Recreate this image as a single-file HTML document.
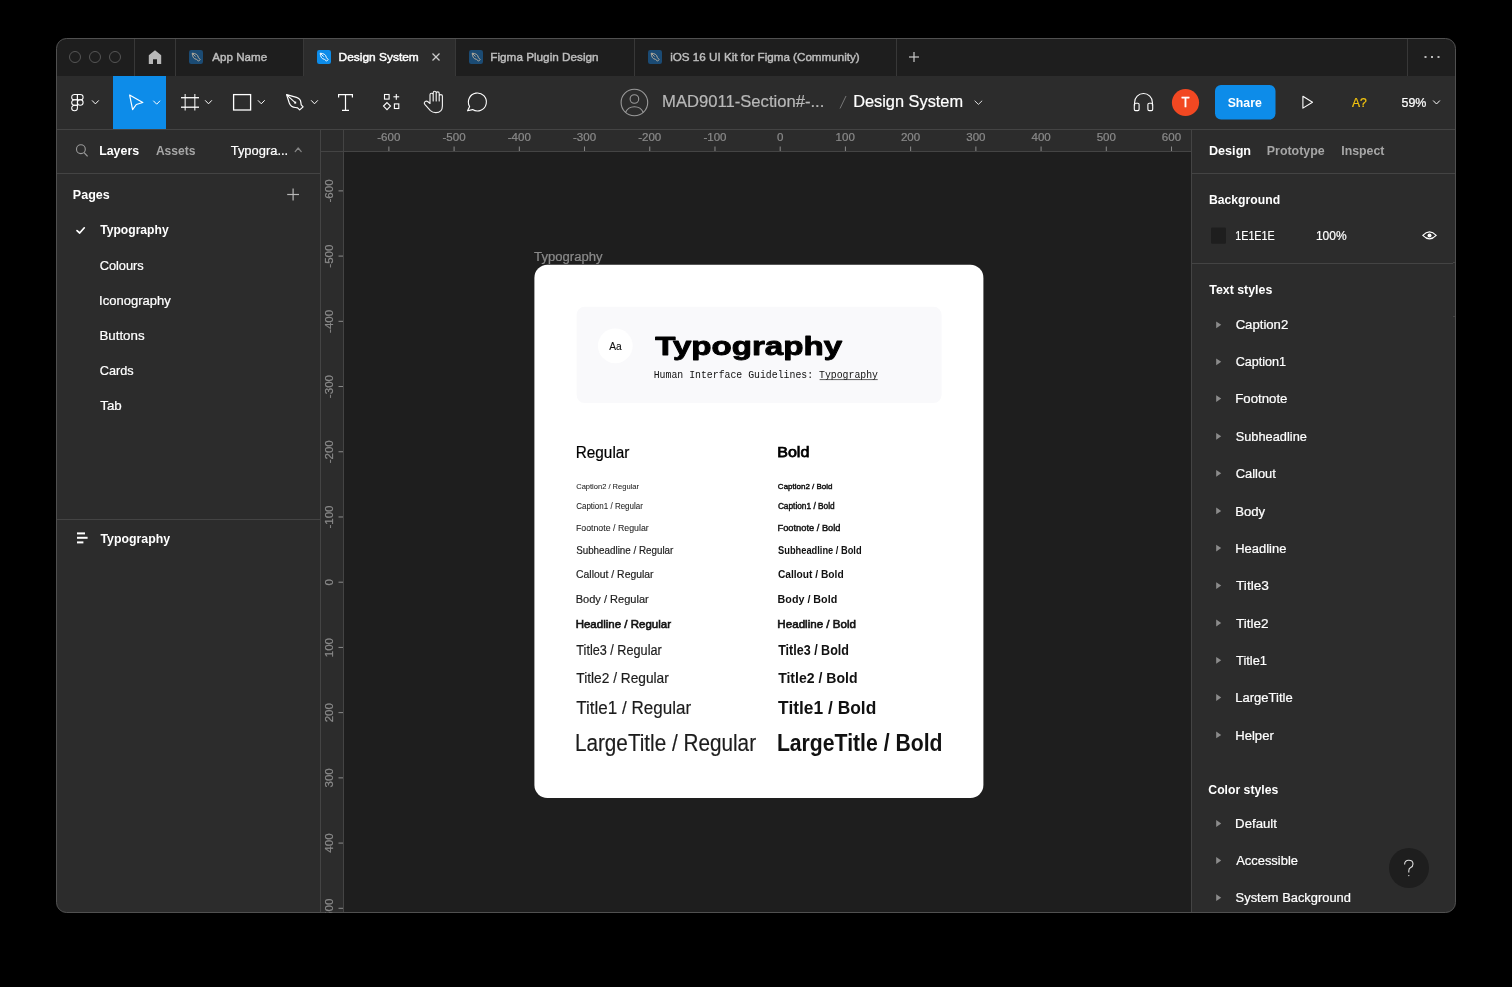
<!DOCTYPE html>
<html><head><meta charset="utf-8"><title>Figma - Design System</title>
<style>html,body{margin:0;padding:0;background:#000;width:1512px;height:987px;overflow:hidden}
svg{position:absolute;left:0;top:0;display:block;will-change:transform}
text{white-space:pre}</style></head>
<body><svg width="1512" height="987" viewBox="0 0 1512 987" shape-rendering="auto">
<defs><clipPath id="win"><rect x="56.5" y="38.5" width="1399.0" height="874.0" rx="10"/></clipPath></defs>
<g clip-path="url(#win)">
<rect x="56.00" y="38.00" width="1400.00" height="875.00" fill="#2c2c2c" rx="0.00" />
<rect x="56.00" y="38.00" width="1400.00" height="38.00" fill="#1e1e1e" rx="0.00" />
<rect x="303.50" y="38.00" width="152.00" height="38.00" fill="#2c2c2c" rx="0.00" />
<line x1="134.50" y1="38.00" x2="134.50" y2="76.00" stroke="#383838" stroke-width="1.00" />
<line x1="175.50" y1="38.00" x2="175.50" y2="76.00" stroke="#383838" stroke-width="1.00" />
<line x1="303.50" y1="38.00" x2="303.50" y2="76.00" stroke="#383838" stroke-width="1.00" />
<line x1="455.50" y1="38.00" x2="455.50" y2="76.00" stroke="#383838" stroke-width="1.00" />
<line x1="634.50" y1="38.00" x2="634.50" y2="76.00" stroke="#383838" stroke-width="1.00" />
<line x1="896.50" y1="38.00" x2="896.50" y2="76.00" stroke="#383838" stroke-width="1.00" />
<line x1="1407.50" y1="38.00" x2="1407.50" y2="76.00" stroke="#383838" stroke-width="1.00" />
<rect x="56.00" y="76.00" width="1400.00" height="53.00" fill="#2c2c2c" rx="0.00" />
<line x1="56.00" y1="129.50" x2="1456.00" y2="129.50" stroke="#444444" stroke-width="1.00" />
<rect x="113.00" y="76.00" width="53.00" height="53.00" fill="#0d8ce9" rx="0.00" />
<rect x="56.00" y="130.00" width="265.00" height="783.00" fill="#2c2c2c" rx="0.00" />
<line x1="56.00" y1="173.50" x2="320.00" y2="173.50" stroke="#444444" stroke-width="1.00" />
<line x1="56.00" y1="519.50" x2="320.00" y2="519.50" stroke="#444444" stroke-width="1.00" />
<line x1="320.50" y1="130.00" x2="320.50" y2="913.00" stroke="#444444" stroke-width="1.00" />
<rect x="321.00" y="130.00" width="870.00" height="22.00" fill="#2c2c2c" rx="0.00" />
<rect x="321.00" y="152.00" width="23.00" height="761.00" fill="#2c2c2c" rx="0.00" />
<line x1="321.00" y1="151.50" x2="1191.00" y2="151.50" stroke="#444444" stroke-width="1.00" />
<line x1="343.50" y1="130.00" x2="343.50" y2="913.00" stroke="#444444" stroke-width="1.00" />
<rect x="344.00" y="152.00" width="847.00" height="761.00" fill="#1e1e1e" rx="0.00" />
<rect x="1191.00" y="130.00" width="265.00" height="783.00" fill="#2c2c2c" rx="0.00" />
<line x1="1191.50" y1="130.00" x2="1191.50" y2="913.00" stroke="#444444" stroke-width="1.00" />
<line x1="1191.00" y1="173.50" x2="1456.00" y2="173.50" stroke="#444444" stroke-width="1.00" />
<line x1="1191.00" y1="263.50" x2="1453.00" y2="263.50" stroke="#444444" stroke-width="1.00" />
<line x1="1453.00" y1="262.50" x2="1456.00" y2="262.50" stroke="#444444" stroke-width="1.00" />
<line x1="1453.00" y1="316.50" x2="1456.00" y2="316.50" stroke="#444444" stroke-width="1.00" />
</g>
<rect x="56.5" y="38.5" width="1399.0" height="874.0" rx="10" fill="none" stroke="#505050" stroke-width="1"/>
<circle cx="75.00" cy="57.00" r="5.50" fill="none" stroke="#555555" stroke-width="1.00" />
<circle cx="95.00" cy="57.00" r="5.50" fill="none" stroke="#555555" stroke-width="1.00" />
<circle cx="115.00" cy="57.00" r="5.50" fill="none" stroke="#555555" stroke-width="1.00" />
<path d="M148.8 55.2 L155 50.2 L161.2 55.2 L161.2 64 L157 64 L157 59.2 L153 59.2 L153 64 L148.8 64 Z" stroke="none" fill="#b8b8b8" stroke-width="1.00" stroke-linejoin="round"/>
<rect x="189.00" y="50.00" width="14.00" height="14.00" fill="#1b4b74" rx="2.20" />
<g transform="translate(189.00 50.00)">
<path d="M3.2 3.2 C6.2 3.4 9 4.4 9.3 7.4 L11.1 9.6 L9.6 11.1 L7.4 9.3 C4.4 9 3.4 6.2 3.2 3.2 Z" stroke="#b8ae9e" fill="none" stroke-width="0.95" stroke-linejoin="round"/>
<line x1="3.40" y1="3.40" x2="6.60" y2="6.60" stroke="#b8ae9e" stroke-width="0.90" />
</g>
<rect x="317.00" y="50.00" width="14.00" height="14.00" fill="#0d8ce9" rx="2.20" />
<g transform="translate(317.00 50.00)">
<path d="M3.2 3.2 C6.2 3.4 9 4.4 9.3 7.4 L11.1 9.6 L9.6 11.1 L7.4 9.3 C4.4 9 3.4 6.2 3.2 3.2 Z" stroke="#ffffff" fill="none" stroke-width="0.95" stroke-linejoin="round"/>
<line x1="3.40" y1="3.40" x2="6.60" y2="6.60" stroke="#ffffff" stroke-width="0.90" />
</g>
<rect x="469.00" y="50.00" width="14.00" height="14.00" fill="#1b4b74" rx="2.20" />
<g transform="translate(469.00 50.00)">
<path d="M3.2 3.2 C6.2 3.4 9 4.4 9.3 7.4 L11.1 9.6 L9.6 11.1 L7.4 9.3 C4.4 9 3.4 6.2 3.2 3.2 Z" stroke="#b8ae9e" fill="none" stroke-width="0.95" stroke-linejoin="round"/>
<line x1="3.40" y1="3.40" x2="6.60" y2="6.60" stroke="#b8ae9e" stroke-width="0.90" />
</g>
<rect x="648.00" y="50.00" width="14.00" height="14.00" fill="#1b4b74" rx="2.20" />
<g transform="translate(648.00 50.00)">
<path d="M3.2 3.2 C6.2 3.4 9 4.4 9.3 7.4 L11.1 9.6 L9.6 11.1 L7.4 9.3 C4.4 9 3.4 6.2 3.2 3.2 Z" stroke="#b8ae9e" fill="none" stroke-width="0.95" stroke-linejoin="round"/>
<line x1="3.40" y1="3.40" x2="6.60" y2="6.60" stroke="#b8ae9e" stroke-width="0.90" />
</g>
<text x="212.28" y="61.40" font-size="11.77" font-weight="normal" fill="#bdbdbd" font-family='"Liberation Sans", sans-serif' textLength="54.84" lengthAdjust="spacingAndGlyphs"  stroke="#bdbdbd" stroke-width="0.45">App Name</text>
<text x="338.62" y="61.40" font-size="11.77" font-weight="normal" fill="#ffffff" font-family='"Liberation Sans", sans-serif' textLength="80.16" lengthAdjust="spacingAndGlyphs"  stroke="#ffffff" stroke-width="0.45">Design System</text>
<line x1="432.50" y1="53.50" x2="439.50" y2="60.50" stroke="#cccccc" stroke-width="1.20" />
<line x1="439.50" y1="53.50" x2="432.50" y2="60.50" stroke="#cccccc" stroke-width="1.20" />
<text x="490.34" y="61.40" font-size="11.77" font-weight="normal" fill="#bdbdbd" font-family='"Liberation Sans", sans-serif' textLength="108.22" lengthAdjust="spacingAndGlyphs"  stroke="#bdbdbd" stroke-width="0.45">Figma Plugin Design</text>
<text x="670.22" y="61.40" font-size="11.77" font-weight="normal" fill="#bdbdbd" font-family='"Liberation Sans", sans-serif' textLength="189.50" lengthAdjust="spacingAndGlyphs"  stroke="#bdbdbd" stroke-width="0.45">iOS 16 UI Kit for Figma (Community)</text>
<line x1="909.00" y1="57.00" x2="919.00" y2="57.00" stroke="#cccccc" stroke-width="1.20" />
<line x1="914.00" y1="52.00" x2="914.00" y2="62.00" stroke="#cccccc" stroke-width="1.20" />
<rect x="1424.50" y="56.00" width="2.00" height="2.00" fill="#bbbbbb" rx="0.00" />
<rect x="1431.00" y="56.00" width="2.00" height="2.00" fill="#bbbbbb" rx="0.00" />
<rect x="1437.50" y="56.00" width="2.00" height="2.00" fill="#bbbbbb" rx="0.00" />
<g transform="translate(71.7 94.4) scale(0.300 0.287)" fill="none" stroke="#fff" stroke-width="3.5">
<path d="M19 28.5a9.5 9.5 0 1 1 19 0 9.5 9.5 0 0 1-19 0z"/>
<path d="M0 47.5A9.5 9.5 0 0 1 9.5 38H19v9.5a9.5 9.5 0 1 1-19 0z"/>
<path d="M19 0v19h9.5a9.5 9.5 0 1 0 0-19H19z"/>
<path d="M0 9.5A9.5 9.5 0 0 0 9.5 19H19V0H9.5A9.5 9.5 0 0 0 0 9.5z"/>
<path d="M0 28.5A9.5 9.5 0 0 0 9.5 38H19V19H9.5A9.5 9.5 0 0 0 0 28.5z"/>
</g>
<path d="M92.3 100.7 L95.4 103.9 L98.5 100.7" stroke="#fff" fill="none" stroke-width="1.00" stroke-linecap="round" stroke-linejoin="round"/>
<path d="M129.6 95 L142.8 102.5 L136.3 104.5 L132.6 109.6 Z" stroke="#ffffff" fill="none" stroke-width="1.20" stroke-linejoin="round"/>
<path d="M153.6 101.0 L156.7 104.2 L159.8 101.0" stroke="#fff" fill="none" stroke-width="1.00" stroke-linecap="round" stroke-linejoin="round"/>
<line x1="185.20" y1="94.00" x2="185.20" y2="110.60" stroke="#cfcfcf" stroke-width="1.30" />
<line x1="194.80" y1="94.00" x2="194.80" y2="110.60" stroke="#cfcfcf" stroke-width="1.30" />
<line x1="181.00" y1="97.70" x2="199.00" y2="97.70" stroke="#ffffff" stroke-width="1.30" />
<line x1="181.00" y1="107.20" x2="199.00" y2="107.20" stroke="#ffffff" stroke-width="1.30" />
<path d="M205.4 100.6 L208.5 103.8 L211.6 100.6" stroke="#fff" fill="none" stroke-width="1.00" stroke-linecap="round" stroke-linejoin="round"/>
<rect x="233.60" y="94.60" width="17.00" height="15.40" fill="none" rx="0.00" stroke="#fff" stroke-width="1.3"/>
<path d="M258.2 100.6 L261.3 103.8 L264.4 100.6" stroke="#fff" fill="none" stroke-width="1.00" stroke-linecap="round" stroke-linejoin="round"/>
<path d="M286.6 94.6 L296.5 97.4 Q300.6 98.8 300.9 102.6 L301.2 104.8 L303.1 106.9 L299.7 109.9 L297.6 107.8 L295.4 107.5 Q290.8 107.2 289.3 103 Z" stroke="#ffffff" fill="none" stroke-width="1.20" stroke-linejoin="round"/>
<line x1="286.80" y1="94.80" x2="294.60" y2="102.20" stroke="#ffffff" stroke-width="1.10" />
<rect x="294.20" y="101.60" width="2.00" height="2.00" fill="#ffffff" rx="0.00" />
<path d="M311.4 100.6 L314.5 103.8 L317.6 100.6" stroke="#fff" fill="none" stroke-width="1.00" stroke-linecap="round" stroke-linejoin="round"/>
<path d="M338.6 97.6 L338.6 94.6 L352.4 94.6 L352.4 97.6 M345.5 94.6 L345.5 110.4 M342 110.4 L349 110.4" stroke="#ffffff" fill="none" stroke-width="1.20" />
<rect x="384.50" y="94.50" width="4.60" height="4.60" fill="none" rx="0.00" stroke="#fff" stroke-width="1.1"/>
<line x1="393.40" y1="96.80" x2="399.20" y2="96.80" stroke="#ffffff" stroke-width="1.10" />
<line x1="396.30" y1="93.90" x2="396.30" y2="99.70" stroke="#ffffff" stroke-width="1.10" />
<path d="M387 102.6 L390.5 106.1 L387 109.6 L383.5 106.1 Z" stroke="#ffffff" fill="none" stroke-width="1.10" stroke-linejoin="miter"/>
<rect x="394.40" y="103.90" width="4.40" height="4.60" fill="none" rx="0.00" stroke="#fff" stroke-width="1.1"/>
<path d="M430 103.5 L430 94.8 Q430 93.2 431.6 93.2 Q433.2 93.2 433.2 94.8 L433.2 101 M433.2 101 L433.2 92.8 Q433.2 91.2 434.7 91.2 Q436.2 91.2 436.2 92.8 L436.2 101 M436.2 101 L436.2 93.2 Q436.2 91.8 437.7 91.8 Q439.2 91.8 439.2 93.2 L439.2 101 M439.2 101 L439.2 96 Q439.2 94.6 440.8 94.6 Q442.4 94.6 442.4 96 L442.4 106 Q442.4 112.6 435.8 112.6 Q432.5 112.6 430.4 110.6 L424.8 104.4 Q423.6 102.8 425 101.6 Q426.6 100.4 428 101.8 L430 103.5" stroke="#f0f0f0" fill="none" stroke-width="1.15" stroke-linejoin="round" stroke-linecap="round"/>
<path d="M469.6 106.5 A9 9 0 1 1 472.6 109.6 L467.6 110.8 Z" stroke="#ffffff" fill="none" stroke-width="1.15" stroke-linejoin="round"/>
<circle cx="634.40" cy="102.50" r="13.30" fill="none" stroke="#9a9a9a" stroke-width="1.10" />
<circle cx="634.40" cy="99.00" r="4.30" fill="none" stroke="#9a9a9a" stroke-width="1.10" />
<path d="M625.5 112.5 Q628 106.8 634.4 106.8 Q640.8 106.8 643.3 112.5" stroke="#9a9a9a" fill="none" stroke-width="1.10" />
<text x="662.05" y="107.30" font-size="17.15" font-weight="normal" fill="#b8b8b8" font-family='"Liberation Sans", sans-serif' textLength="162.26" lengthAdjust="spacingAndGlyphs"  stroke="#b8b8b8" stroke-width="0.22">MAD9011-Section#-...</text>
<line x1="846.00" y1="96.00" x2="840.00" y2="108.50" stroke="#777777" stroke-width="1.00" />
<text x="853.16" y="107.30" font-size="17.15" font-weight="normal" fill="#ffffff" font-family='"Liberation Sans", sans-serif' textLength="109.92" lengthAdjust="spacingAndGlyphs"  stroke="#ffffff" stroke-width="0.22">Design System</text>
<path d="M974.9 101.0 L978.4 104.4 L981.9 101.0" stroke="#dddddd" fill="none" stroke-width="1.00" stroke-linecap="round" stroke-linejoin="round"/>
<path d="M1134.6 105.5 L1134.6 102.4 A8.9 8.9 0 0 1 1152.4 102.4 L1152.4 105.5" stroke="#ffffff" fill="none" stroke-width="1.10" />
<rect x="1134.30" y="103.20" width="4.80" height="7.40" fill="none" rx="1.30" stroke="#fff" stroke-width="1.1"/>
<rect x="1147.90" y="103.20" width="4.80" height="7.40" fill="none" rx="1.30" stroke="#fff" stroke-width="1.1"/>
<circle cx="1185.50" cy="102.50" r="13.60" fill="#f24822" stroke="none" stroke-width="1.00" />
<text x="1181.61" y="107.00" font-size="14.53" font-weight="normal" fill="#fff" font-family='"Liberation Sans", sans-serif' textLength="7.99" lengthAdjust="spacingAndGlyphs"  stroke="#fff" stroke-width="0.35">T</text>
<rect x="1215.00" y="85.00" width="60.50" height="34.60" fill="#0d8ce9" rx="6.00" />
<text x="1227.65" y="107.10" font-size="13.37" font-weight="bold" fill="#fff" font-family='"Liberation Sans", sans-serif' textLength="34.17" lengthAdjust="spacingAndGlyphs" >Share</text>
<path d="M1302.9 96.3 L1312.5 102.2 L1302.9 108.1 Z" stroke="#ffffff" fill="none" stroke-width="1.10" stroke-linejoin="round"/>
<text x="1351.98" y="107.10" font-size="13.37" font-weight="normal" fill="#f2c30f" font-family='"Liberation Sans", sans-serif' textLength="14.88" lengthAdjust="spacingAndGlyphs"  stroke="#f2c30f" stroke-width="0.22">A?</text>
<text x="1401.50" y="106.80" font-size="13.08" font-weight="normal" fill="#ffffff" font-family='"Liberation Sans", sans-serif' textLength="24.94" lengthAdjust="spacingAndGlyphs"  stroke="#ffffff" stroke-width="0.22">59%</text>
<path d="M1433.4 100.8 L1436.5 104.0 L1439.6 100.8" stroke="#fff" fill="none" stroke-width="1.00" stroke-linecap="round" stroke-linejoin="round"/>
<circle cx="80.90" cy="149.20" r="4.40" fill="none" stroke="#9a9a9a" stroke-width="1.10" />
<line x1="84.10" y1="152.60" x2="87.60" y2="156.40" stroke="#9a9a9a" stroke-width="1.20" />
<text x="99.17" y="155.30" font-size="13.23" font-weight="bold" fill="#fff" font-family='"Liberation Sans", sans-serif' textLength="39.94" lengthAdjust="spacingAndGlyphs" >Layers</text>
<text x="155.90" y="155.30" font-size="13.23" font-weight="bold" fill="#a6a6a6" font-family='"Liberation Sans", sans-serif' textLength="39.60" lengthAdjust="spacingAndGlyphs" >Assets</text>
<text x="230.71" y="155.30" font-size="13.23" font-weight="normal" fill="#fff" font-family='"Liberation Sans", sans-serif' textLength="57.45" lengthAdjust="spacingAndGlyphs"  stroke="#fff" stroke-width="0.22">Typogra...</text>
<path d="M295.2 151.6 L298.2 148.0 L301.2 151.6" stroke="#858585" fill="none" stroke-width="1.25" stroke-linecap="round" stroke-linejoin="round"/>
<text x="72.86" y="199.30" font-size="13.23" font-weight="bold" fill="#fff" font-family='"Liberation Sans", sans-serif' textLength="36.85" lengthAdjust="spacingAndGlyphs" >Pages</text>
<line x1="287.20" y1="194.50" x2="299.00" y2="194.50" stroke="#b8b8b8" stroke-width="1.20" />
<line x1="293.10" y1="188.60" x2="293.10" y2="200.40" stroke="#b8b8b8" stroke-width="1.20" />
<path d="M77 230.6 L79.7 233 L84.3 227.8" stroke="#ffffff" fill="none" stroke-width="1.70" stroke-linecap="round" stroke-linejoin="round"/>
<text x="100.17" y="234.40" font-size="13.23" font-weight="bold" fill="#fff" font-family='"Liberation Sans", sans-serif' textLength="68.50" lengthAdjust="spacingAndGlyphs" >Typography</text>
<text x="99.65" y="269.90" font-size="12.94" font-weight="normal" fill="#fff" font-family='"Liberation Sans", sans-serif' textLength="44.11" lengthAdjust="spacingAndGlyphs"  stroke="#fff" stroke-width="0.22">Colours</text>
<text x="99.10" y="304.70" font-size="12.94" font-weight="normal" fill="#fff" font-family='"Liberation Sans", sans-serif' textLength="71.73" lengthAdjust="spacingAndGlyphs"  stroke="#fff" stroke-width="0.22">Iconography</text>
<text x="99.41" y="339.90" font-size="12.94" font-weight="normal" fill="#fff" font-family='"Liberation Sans", sans-serif' textLength="45.17" lengthAdjust="spacingAndGlyphs"  stroke="#fff" stroke-width="0.22">Buttons</text>
<text x="99.86" y="374.80" font-size="12.94" font-weight="normal" fill="#fff" font-family='"Liberation Sans", sans-serif' textLength="33.80" lengthAdjust="spacingAndGlyphs"  stroke="#fff" stroke-width="0.22">Cards</text>
<text x="100.22" y="410.00" font-size="12.94" font-weight="normal" fill="#fff" font-family='"Liberation Sans", sans-serif' textLength="21.50" lengthAdjust="spacingAndGlyphs"  stroke="#fff" stroke-width="0.22">Tab</text>
<rect x="77.00" y="532.40" width="8.00" height="2.00" fill="#fff" rx="0.00" />
<rect x="77.00" y="536.80" width="10.60" height="2.00" fill="#fff" rx="0.00" />
<rect x="77.00" y="541.40" width="6.40" height="2.00" fill="#fff" rx="0.00" />
<text x="100.46" y="542.50" font-size="13.23" font-weight="bold" fill="#fff" font-family='"Liberation Sans", sans-serif' textLength="69.60" lengthAdjust="spacingAndGlyphs" >Typography</text>
<line x1="388.88" y1="146.50" x2="388.88" y2="151.00" stroke="#8a8a8a" stroke-width="1.00" />
<text x="377.28" y="141.40" font-size="11.56" font-weight="normal" fill="#8a8a8a" font-family='"Liberation Sans", sans-serif'  stroke="#8a8a8a" stroke-width="0.22">-600</text>
<line x1="454.10" y1="146.50" x2="454.10" y2="151.00" stroke="#8a8a8a" stroke-width="1.00" />
<text x="442.50" y="141.40" font-size="11.56" font-weight="normal" fill="#8a8a8a" font-family='"Liberation Sans", sans-serif'  stroke="#8a8a8a" stroke-width="0.22">-500</text>
<line x1="519.32" y1="146.50" x2="519.32" y2="151.00" stroke="#8a8a8a" stroke-width="1.00" />
<text x="507.72" y="141.40" font-size="11.56" font-weight="normal" fill="#8a8a8a" font-family='"Liberation Sans", sans-serif'  stroke="#8a8a8a" stroke-width="0.22">-400</text>
<line x1="584.54" y1="146.50" x2="584.54" y2="151.00" stroke="#8a8a8a" stroke-width="1.00" />
<text x="572.94" y="141.40" font-size="11.56" font-weight="normal" fill="#8a8a8a" font-family='"Liberation Sans", sans-serif'  stroke="#8a8a8a" stroke-width="0.22">-300</text>
<line x1="649.76" y1="146.50" x2="649.76" y2="151.00" stroke="#8a8a8a" stroke-width="1.00" />
<text x="638.16" y="141.40" font-size="11.56" font-weight="normal" fill="#8a8a8a" font-family='"Liberation Sans", sans-serif'  stroke="#8a8a8a" stroke-width="0.22">-200</text>
<line x1="714.98" y1="146.50" x2="714.98" y2="151.00" stroke="#8a8a8a" stroke-width="1.00" />
<text x="703.38" y="141.40" font-size="11.56" font-weight="normal" fill="#8a8a8a" font-family='"Liberation Sans", sans-serif'  stroke="#8a8a8a" stroke-width="0.22">-100</text>
<line x1="780.20" y1="146.50" x2="780.20" y2="151.00" stroke="#8a8a8a" stroke-width="1.00" />
<text x="776.99" y="141.40" font-size="11.56" font-weight="normal" fill="#8a8a8a" font-family='"Liberation Sans", sans-serif'  stroke="#8a8a8a" stroke-width="0.22">0</text>
<line x1="845.42" y1="146.50" x2="845.42" y2="151.00" stroke="#8a8a8a" stroke-width="1.00" />
<text x="835.56" y="141.40" font-size="11.56" font-weight="normal" fill="#8a8a8a" font-family='"Liberation Sans", sans-serif'  stroke="#8a8a8a" stroke-width="0.22">100</text>
<line x1="910.64" y1="146.50" x2="910.64" y2="151.00" stroke="#8a8a8a" stroke-width="1.00" />
<text x="900.93" y="141.40" font-size="11.56" font-weight="normal" fill="#8a8a8a" font-family='"Liberation Sans", sans-serif'  stroke="#8a8a8a" stroke-width="0.22">200</text>
<line x1="975.86" y1="146.50" x2="975.86" y2="151.00" stroke="#8a8a8a" stroke-width="1.00" />
<text x="966.22" y="141.40" font-size="11.56" font-weight="normal" fill="#8a8a8a" font-family='"Liberation Sans", sans-serif'  stroke="#8a8a8a" stroke-width="0.22">300</text>
<line x1="1041.08" y1="146.50" x2="1041.08" y2="151.00" stroke="#8a8a8a" stroke-width="1.00" />
<text x="1031.53" y="141.40" font-size="11.56" font-weight="normal" fill="#8a8a8a" font-family='"Liberation Sans", sans-serif'  stroke="#8a8a8a" stroke-width="0.22">400</text>
<line x1="1106.30" y1="146.50" x2="1106.30" y2="151.00" stroke="#8a8a8a" stroke-width="1.00" />
<text x="1096.65" y="141.40" font-size="11.56" font-weight="normal" fill="#8a8a8a" font-family='"Liberation Sans", sans-serif'  stroke="#8a8a8a" stroke-width="0.22">500</text>
<line x1="1171.52" y1="146.50" x2="1171.52" y2="151.00" stroke="#8a8a8a" stroke-width="1.00" />
<text x="1161.81" y="141.40" font-size="11.56" font-weight="normal" fill="#8a8a8a" font-family='"Liberation Sans", sans-serif'  stroke="#8a8a8a" stroke-width="0.22">600</text>
<defs><clipPath id="vr"><rect x="321" y="152" width="23" height="760.5"/></clipPath></defs><g clip-path="url(#vr)">
<line x1="338.50" y1="190.88" x2="343.00" y2="190.88" stroke="#8a8a8a" stroke-width="1.00" />
<g transform="translate(333.3 190.88) rotate(-90)">
<text x="-11.60" y="0.00" font-size="11.56" font-weight="normal" fill="#8a8a8a" font-family='"Liberation Sans", sans-serif'  stroke="#8a8a8a" stroke-width="0.22">-600</text>
</g>
<line x1="338.50" y1="256.10" x2="343.00" y2="256.10" stroke="#8a8a8a" stroke-width="1.00" />
<g transform="translate(333.3 256.10) rotate(-90)">
<text x="-11.60" y="0.00" font-size="11.56" font-weight="normal" fill="#8a8a8a" font-family='"Liberation Sans", sans-serif'  stroke="#8a8a8a" stroke-width="0.22">-500</text>
</g>
<line x1="338.50" y1="321.32" x2="343.00" y2="321.32" stroke="#8a8a8a" stroke-width="1.00" />
<g transform="translate(333.3 321.32) rotate(-90)">
<text x="-11.60" y="0.00" font-size="11.56" font-weight="normal" fill="#8a8a8a" font-family='"Liberation Sans", sans-serif'  stroke="#8a8a8a" stroke-width="0.22">-400</text>
</g>
<line x1="338.50" y1="386.54" x2="343.00" y2="386.54" stroke="#8a8a8a" stroke-width="1.00" />
<g transform="translate(333.3 386.54) rotate(-90)">
<text x="-11.60" y="0.00" font-size="11.56" font-weight="normal" fill="#8a8a8a" font-family='"Liberation Sans", sans-serif'  stroke="#8a8a8a" stroke-width="0.22">-300</text>
</g>
<line x1="338.50" y1="451.76" x2="343.00" y2="451.76" stroke="#8a8a8a" stroke-width="1.00" />
<g transform="translate(333.3 451.76) rotate(-90)">
<text x="-11.60" y="0.00" font-size="11.56" font-weight="normal" fill="#8a8a8a" font-family='"Liberation Sans", sans-serif'  stroke="#8a8a8a" stroke-width="0.22">-200</text>
</g>
<line x1="338.50" y1="516.98" x2="343.00" y2="516.98" stroke="#8a8a8a" stroke-width="1.00" />
<g transform="translate(333.3 516.98) rotate(-90)">
<text x="-11.60" y="0.00" font-size="11.56" font-weight="normal" fill="#8a8a8a" font-family='"Liberation Sans", sans-serif'  stroke="#8a8a8a" stroke-width="0.22">-100</text>
</g>
<line x1="338.50" y1="582.20" x2="343.00" y2="582.20" stroke="#8a8a8a" stroke-width="1.00" />
<g transform="translate(333.3 582.20) rotate(-90)">
<text x="-3.21" y="0.00" font-size="11.56" font-weight="normal" fill="#8a8a8a" font-family='"Liberation Sans", sans-serif'  stroke="#8a8a8a" stroke-width="0.22">0</text>
</g>
<line x1="338.50" y1="647.42" x2="343.00" y2="647.42" stroke="#8a8a8a" stroke-width="1.00" />
<g transform="translate(333.3 647.42) rotate(-90)">
<text x="-9.86" y="0.00" font-size="11.56" font-weight="normal" fill="#8a8a8a" font-family='"Liberation Sans", sans-serif'  stroke="#8a8a8a" stroke-width="0.22">100</text>
</g>
<line x1="338.50" y1="712.64" x2="343.00" y2="712.64" stroke="#8a8a8a" stroke-width="1.00" />
<g transform="translate(333.3 712.64) rotate(-90)">
<text x="-9.71" y="0.00" font-size="11.56" font-weight="normal" fill="#8a8a8a" font-family='"Liberation Sans", sans-serif'  stroke="#8a8a8a" stroke-width="0.22">200</text>
</g>
<line x1="338.50" y1="777.86" x2="343.00" y2="777.86" stroke="#8a8a8a" stroke-width="1.00" />
<g transform="translate(333.3 777.86) rotate(-90)">
<text x="-9.64" y="0.00" font-size="11.56" font-weight="normal" fill="#8a8a8a" font-family='"Liberation Sans", sans-serif'  stroke="#8a8a8a" stroke-width="0.22">300</text>
</g>
<line x1="338.50" y1="843.08" x2="343.00" y2="843.08" stroke="#8a8a8a" stroke-width="1.00" />
<g transform="translate(333.3 843.08) rotate(-90)">
<text x="-9.55" y="0.00" font-size="11.56" font-weight="normal" fill="#8a8a8a" font-family='"Liberation Sans", sans-serif'  stroke="#8a8a8a" stroke-width="0.22">400</text>
</g>
<line x1="338.50" y1="908.30" x2="343.00" y2="908.30" stroke="#8a8a8a" stroke-width="1.00" />
<g transform="translate(333.3 908.30) rotate(-90)">
<text x="-9.65" y="0.00" font-size="11.56" font-weight="normal" fill="#8a8a8a" font-family='"Liberation Sans", sans-serif'  stroke="#8a8a8a" stroke-width="0.22">500</text>
</g>
</g>
<text x="1208.95" y="155.30" font-size="13.23" font-weight="bold" fill="#fff" font-family='"Liberation Sans", sans-serif' textLength="42.13" lengthAdjust="spacingAndGlyphs" >Design</text>
<text x="1266.77" y="155.30" font-size="13.23" font-weight="bold" fill="#a6a6a6" font-family='"Liberation Sans", sans-serif' textLength="57.96" lengthAdjust="spacingAndGlyphs" >Prototype</text>
<text x="1341.28" y="155.30" font-size="13.23" font-weight="bold" fill="#a6a6a6" font-family='"Liberation Sans", sans-serif' textLength="43.18" lengthAdjust="spacingAndGlyphs" >Inspect</text>
<text x="1208.98" y="204.40" font-size="13.23" font-weight="bold" fill="#fff" font-family='"Liberation Sans", sans-serif' textLength="71.12" lengthAdjust="spacingAndGlyphs" >Background</text>
<rect x="1211.00" y="227.60" width="15.00" height="16.20" fill="#1e1e1e" rx="1.20" />
<text x="1235.28" y="239.90" font-size="13.23" font-weight="normal" fill="#fff" font-family='"Liberation Sans", sans-serif' textLength="39.38" lengthAdjust="spacingAndGlyphs"  stroke="#fff" stroke-width="0.22">1E1E1E</text>
<text x="1315.88" y="239.90" font-size="13.23" font-weight="normal" fill="#fff" font-family='"Liberation Sans", sans-serif' textLength="30.74" lengthAdjust="spacingAndGlyphs"  stroke="#fff" stroke-width="0.22">100%</text>
<path d="M1422.8 235.4 Q1429.5 228.4 1436.2 235.4 Q1429.5 242.4 1422.8 235.4 Z" stroke="#ffffff" fill="none" stroke-width="1.10" />
<circle cx="1429.50" cy="235.40" r="2.00" fill="#ffffff" stroke="none" stroke-width="1.00" />
<text x="1209.26" y="294.20" font-size="13.23" font-weight="bold" fill="#fff" font-family='"Liberation Sans", sans-serif' textLength="63.04" lengthAdjust="spacingAndGlyphs" >Text styles</text>
<path d="M1216.2 321.40 L1221.2 324.80 L1216.2 328.20 Z" stroke="none" fill="#8c8c8c" stroke-width="1.00" />
<text x="1235.63" y="329.40" font-size="13.08" font-weight="normal" fill="#fff" font-family='"Liberation Sans", sans-serif' textLength="52.63" lengthAdjust="spacingAndGlyphs"  stroke="#fff" stroke-width="0.22">Caption2</text>
<path d="M1216.2 358.40 L1221.2 361.80 L1216.2 365.20 Z" stroke="none" fill="#8c8c8c" stroke-width="1.00" />
<text x="1235.66" y="366.40" font-size="13.08" font-weight="normal" fill="#fff" font-family='"Liberation Sans", sans-serif' textLength="50.35" lengthAdjust="spacingAndGlyphs"  stroke="#fff" stroke-width="0.22">Caption1</text>
<path d="M1216.2 395.20 L1221.2 398.60 L1216.2 402.00 Z" stroke="none" fill="#8c8c8c" stroke-width="1.00" />
<text x="1235.21" y="403.20" font-size="13.08" font-weight="normal" fill="#fff" font-family='"Liberation Sans", sans-serif' textLength="52.27" lengthAdjust="spacingAndGlyphs"  stroke="#fff" stroke-width="0.22">Footnote</text>
<path d="M1216.2 432.90 L1221.2 436.30 L1216.2 439.70 Z" stroke="none" fill="#8c8c8c" stroke-width="1.00" />
<text x="1235.72" y="440.90" font-size="13.08" font-weight="normal" fill="#fff" font-family='"Liberation Sans", sans-serif' textLength="71.15" lengthAdjust="spacingAndGlyphs"  stroke="#fff" stroke-width="0.22">Subheadline</text>
<path d="M1216.2 469.90 L1221.2 473.30 L1216.2 476.70 Z" stroke="none" fill="#8c8c8c" stroke-width="1.00" />
<text x="1235.64" y="477.90" font-size="13.08" font-weight="normal" fill="#fff" font-family='"Liberation Sans", sans-serif' textLength="40.25" lengthAdjust="spacingAndGlyphs"  stroke="#fff" stroke-width="0.22">Callout</text>
<path d="M1216.2 507.50 L1221.2 510.90 L1216.2 514.30 Z" stroke="none" fill="#8c8c8c" stroke-width="1.00" />
<text x="1235.22" y="515.50" font-size="13.08" font-weight="normal" fill="#fff" font-family='"Liberation Sans", sans-serif' textLength="29.90" lengthAdjust="spacingAndGlyphs"  stroke="#fff" stroke-width="0.22">Body</text>
<path d="M1216.2 544.70 L1221.2 548.10 L1216.2 551.50 Z" stroke="none" fill="#8c8c8c" stroke-width="1.00" />
<text x="1235.24" y="552.70" font-size="13.08" font-weight="normal" fill="#fff" font-family='"Liberation Sans", sans-serif' textLength="51.14" lengthAdjust="spacingAndGlyphs"  stroke="#fff" stroke-width="0.22">Headline</text>
<path d="M1216.2 582.20 L1221.2 585.60 L1216.2 589.00 Z" stroke="none" fill="#8c8c8c" stroke-width="1.00" />
<text x="1236.00" y="590.20" font-size="13.08" font-weight="normal" fill="#fff" font-family='"Liberation Sans", sans-serif' textLength="33.00" lengthAdjust="spacingAndGlyphs"  stroke="#fff" stroke-width="0.22">Title3</text>
<path d="M1216.2 619.60 L1221.2 623.00 L1216.2 626.40 Z" stroke="none" fill="#8c8c8c" stroke-width="1.00" />
<text x="1236.00" y="627.60" font-size="13.08" font-weight="normal" fill="#fff" font-family='"Liberation Sans", sans-serif' textLength="32.67" lengthAdjust="spacingAndGlyphs"  stroke="#fff" stroke-width="0.22">Title2</text>
<path d="M1216.2 656.90 L1221.2 660.30 L1216.2 663.70 Z" stroke="none" fill="#8c8c8c" stroke-width="1.00" />
<text x="1236.02" y="664.90" font-size="13.08" font-weight="normal" fill="#fff" font-family='"Liberation Sans", sans-serif' textLength="31.00" lengthAdjust="spacingAndGlyphs"  stroke="#fff" stroke-width="0.22">Title1</text>
<path d="M1216.2 694.10 L1221.2 697.50 L1216.2 700.90 Z" stroke="none" fill="#8c8c8c" stroke-width="1.00" />
<text x="1235.24" y="702.10" font-size="13.08" font-weight="normal" fill="#fff" font-family='"Liberation Sans", sans-serif' textLength="57.43" lengthAdjust="spacingAndGlyphs"  stroke="#fff" stroke-width="0.22">LargeTitle</text>
<path d="M1216.2 731.50 L1221.2 734.90 L1216.2 738.30 Z" stroke="none" fill="#8c8c8c" stroke-width="1.00" />
<text x="1235.23" y="739.50" font-size="13.08" font-weight="normal" fill="#fff" font-family='"Liberation Sans", sans-serif' textLength="38.59" lengthAdjust="spacingAndGlyphs"  stroke="#fff" stroke-width="0.22">Helper</text>
<text x="1208.30" y="793.60" font-size="13.23" font-weight="bold" fill="#fff" font-family='"Liberation Sans", sans-serif' textLength="70.00" lengthAdjust="spacingAndGlyphs" >Color styles</text>
<path d="M1216.2 820.10 L1221.2 823.50 L1216.2 826.90 Z" stroke="none" fill="#8c8c8c" stroke-width="1.00" />
<text x="1235.12" y="828.10" font-size="13.08" font-weight="normal" fill="#fff" font-family='"Liberation Sans", sans-serif' textLength="41.88" lengthAdjust="spacingAndGlyphs"  stroke="#fff" stroke-width="0.22">Default</text>
<path d="M1216.2 857.10 L1221.2 860.50 L1216.2 863.90 Z" stroke="none" fill="#8c8c8c" stroke-width="1.00" />
<text x="1236.17" y="865.10" font-size="13.08" font-weight="normal" fill="#fff" font-family='"Liberation Sans", sans-serif' textLength="61.80" lengthAdjust="spacingAndGlyphs"  stroke="#fff" stroke-width="0.22">Accessible</text>
<path d="M1216.2 894.30 L1221.2 897.70 L1216.2 901.10 Z" stroke="none" fill="#8c8c8c" stroke-width="1.00" />
<text x="1235.61" y="902.30" font-size="13.08" font-weight="normal" fill="#fff" font-family='"Liberation Sans", sans-serif' textLength="115.32" lengthAdjust="spacingAndGlyphs"  stroke="#fff" stroke-width="0.22">System Background</text>
<circle cx="1409.00" cy="868.00" r="20.00" fill="#1e1e1e" stroke="none" stroke-width="1.00" />
<path d="M1404.6 864.4 Q1404.6 860.2 1408.8 860.2 Q1413 860.2 1413 864 Q1413 866.6 1410.4 867.8 Q1408.8 868.6 1408.8 870.8 L1408.8 872.4" stroke="#dddddd" fill="none" stroke-width="1.10" />
<circle cx="1408.80" cy="875.60" r="0.70" fill="#dddddd" stroke="none" stroke-width="1.00" />
<text x="534.11" y="260.80" font-size="12.50" font-weight="normal" fill="#8a8a8a" font-family='"Liberation Sans", sans-serif' textLength="68.42" lengthAdjust="spacingAndGlyphs"  stroke="#8a8a8a" stroke-width="0.22">Typography</text>
<rect x="534.40" y="264.80" width="449.00" height="533.20" fill="#ffffff" rx="13.00" />
<rect x="576.60" y="306.80" width="365.00" height="96.20" fill="#f9f9fb" rx="8.00" />
<circle cx="615.30" cy="345.80" r="17.40" fill="#ffffff" stroke="none" stroke-width="1.00" />
<text x="609.18" y="350.20" font-size="11.34" font-weight="normal" fill="#111" font-family='"Liberation Sans", sans-serif' textLength="12.52" lengthAdjust="spacingAndGlyphs"  stroke="#111" stroke-width="0.12">Aa</text>
<text x="655.18" y="354.55" font-size="25.44" font-weight="bold" fill="#000" font-family='"Liberation Sans", sans-serif' textLength="186.94" lengthAdjust="spacingAndGlyphs" stroke-linejoin="round" stroke="#000" stroke-width="0.90">Typography</text>
<text x="653.72" y="377.90" font-size="10.00" font-weight="normal" fill="#111" font-family='"Liberation Mono", monospace' textLength="224.30" lengthAdjust="spacingAndGlyphs" >Human Interface Guidelines: Typography</text>
<line x1="819.60" y1="379.60" x2="877.70" y2="379.60" stroke="#333" stroke-width="0.80" />
<text x="575.74" y="457.50" font-size="16.13" font-weight="normal" fill="#000000" font-family='"Liberation Sans", sans-serif' textLength="53.71" lengthAdjust="spacingAndGlyphs"  stroke="#000000" stroke-width="0.20">Regular</text>
<text x="777.18" y="457.30" font-size="15.26" font-weight="normal" fill="#000000" font-family='"Liberation Sans", sans-serif' textLength="32.15" lengthAdjust="spacingAndGlyphs"  stroke="#000000" stroke-width="0.75">Bold</text>
<text x="576.22" y="488.90" font-size="7.78" font-weight="normal" fill="#1c1c1c" font-family='"Liberation Sans", sans-serif' textLength="62.71" lengthAdjust="spacingAndGlyphs"  stroke="#1c1c1c" stroke-width="0.06">Caption2 / Regular</text>
<text x="777.89" y="488.90" font-size="7.78" font-weight="normal" fill="#111" font-family='"Liberation Sans", sans-serif' textLength="54.62" lengthAdjust="spacingAndGlyphs"  stroke="#111" stroke-width="0.42">Caption2 / Bold</text>
<text x="576.19" y="508.80" font-size="8.27" font-weight="normal" fill="#1c1c1c" font-family='"Liberation Sans", sans-serif' textLength="66.74" lengthAdjust="spacingAndGlyphs"  stroke="#1c1c1c" stroke-width="0.06">Caption1 / Regular</text>
<text x="777.88" y="508.80" font-size="8.27" font-weight="normal" fill="#111" font-family='"Liberation Sans", sans-serif' textLength="56.76" lengthAdjust="spacingAndGlyphs"  stroke="#111" stroke-width="0.42">Caption1 / Bold</text>
<text x="575.88" y="530.90" font-size="8.87" font-weight="normal" fill="#1c1c1c" font-family='"Liberation Sans", sans-serif' textLength="72.87" lengthAdjust="spacingAndGlyphs"  stroke="#1c1c1c" stroke-width="0.06">Footnote / Regular</text>
<text x="777.54" y="530.90" font-size="8.87" font-weight="normal" fill="#111" font-family='"Liberation Sans", sans-serif' textLength="62.96" lengthAdjust="spacingAndGlyphs"  stroke="#111" stroke-width="0.42">Footnote / Bold</text>
<text x="576.15" y="553.80" font-size="10.32" font-weight="normal" fill="#1c1c1c" font-family='"Liberation Sans", sans-serif' textLength="97.21" lengthAdjust="spacingAndGlyphs"  stroke="#1c1c1c" stroke-width="0.18">Subheadline / Regular</text>
<text x="778.03" y="553.80" font-size="10.32" font-weight="bold" fill="#111" font-family='"Liberation Sans", sans-serif' textLength="83.58" lengthAdjust="spacingAndGlyphs" >Subheadline / Bold</text>
<text x="576.07" y="578.30" font-size="11.02" font-weight="normal" fill="#1c1c1c" font-family='"Liberation Sans", sans-serif' textLength="77.50" lengthAdjust="spacingAndGlyphs"  stroke="#1c1c1c" stroke-width="0.18">Callout / Regular</text>
<text x="777.88" y="578.30" font-size="11.02" font-weight="bold" fill="#111" font-family='"Liberation Sans", sans-serif' textLength="65.79" lengthAdjust="spacingAndGlyphs" >Callout / Bold</text>
<text x="575.69" y="602.90" font-size="11.63" font-weight="normal" fill="#1c1c1c" font-family='"Liberation Sans", sans-serif' textLength="73.09" lengthAdjust="spacingAndGlyphs"  stroke="#1c1c1c" stroke-width="0.18">Body / Regular</text>
<text x="777.58" y="602.90" font-size="11.63" font-weight="bold" fill="#111" font-family='"Liberation Sans", sans-serif' textLength="59.63" lengthAdjust="spacingAndGlyphs" >Body / Bold</text>
<text x="575.66" y="628.30" font-size="11.63" font-weight="normal" fill="#111" font-family='"Liberation Sans", sans-serif' textLength="95.34" lengthAdjust="spacingAndGlyphs"  stroke="#111" stroke-width="0.60">Headline / Regular</text>
<text x="777.35" y="628.30" font-size="11.63" font-weight="normal" fill="#111" font-family='"Liberation Sans", sans-serif' textLength="78.70" lengthAdjust="spacingAndGlyphs"  stroke="#111" stroke-width="0.60">Headline / Bold</text>
<text x="576.32" y="654.70" font-size="13.81" font-weight="normal" fill="#1c1c1c" font-family='"Liberation Sans", sans-serif' textLength="85.39" lengthAdjust="spacingAndGlyphs"  stroke="#1c1c1c" stroke-width="0.18">Title3 / Regular</text>
<text x="778.16" y="654.70" font-size="13.81" font-weight="bold" fill="#111" font-family='"Liberation Sans", sans-serif' textLength="70.76" lengthAdjust="spacingAndGlyphs" >Title3 / Bold</text>
<text x="576.29" y="682.60" font-size="14.97" font-weight="normal" fill="#1c1c1c" font-family='"Liberation Sans", sans-serif' textLength="92.53" lengthAdjust="spacingAndGlyphs"  stroke="#1c1c1c" stroke-width="0.18">Title2 / Regular</text>
<text x="778.14" y="682.60" font-size="14.97" font-weight="bold" fill="#111" font-family='"Liberation Sans", sans-serif' textLength="79.38" lengthAdjust="spacingAndGlyphs" >Title2 / Bold</text>
<text x="576.22" y="714.40" font-size="19.19" font-weight="normal" fill="#1c1c1c" font-family='"Liberation Sans", sans-serif' textLength="114.86" lengthAdjust="spacingAndGlyphs"  stroke="#1c1c1c" stroke-width="0.18">Title1 / Regular</text>
<text x="778.11" y="714.40" font-size="19.19" font-weight="bold" fill="#111" font-family='"Liberation Sans", sans-serif' textLength="98.14" lengthAdjust="spacingAndGlyphs" >Title1 / Bold</text>
<text x="574.91" y="751.00" font-size="23.11" font-weight="normal" fill="#1c1c1c" font-family='"Liberation Sans", sans-serif' textLength="181.13" lengthAdjust="spacingAndGlyphs"  stroke="#1c1c1c" stroke-width="0.18">LargeTitle / Regular</text>
<text x="776.89" y="751.00" font-size="23.11" font-weight="bold" fill="#111" font-family='"Liberation Sans", sans-serif' textLength="165.61" lengthAdjust="spacingAndGlyphs" >LargeTitle / Bold</text>
</svg></body></html>
